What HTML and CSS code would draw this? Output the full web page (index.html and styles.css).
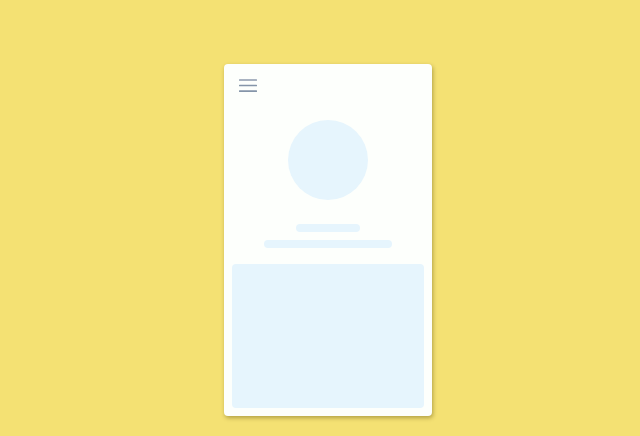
FILE: index.html
```html
<!DOCTYPE html>
<html lang="en">
<head>
  <meta charset="utf-8">
  <meta name="viewport" content="width=device-width, initial-scale=1">
  <title>Profile</title>
  <link rel="stylesheet" href="styles.css">
</head>
<body>
  <main class="stage">
    <article class="card">
      <header class="card-header">
        <button class="menu-button" type="button" aria-label="Menu">
          <svg class="menu-icon" viewBox="0 0 18 14" aria-hidden="true">
            <rect x="0" y="0" width="18" height="2" rx="0.5" fill="#a9b3c1"/>
            <rect x="0" y="5.7" width="18" height="1.6" rx="0.5" fill="#8595a9"/>
            <rect x="0" y="11.2" width="18" height="1.7" rx="0.5" fill="#8595a9"/>
          </svg>
        </button>
      </header>
      <div class="avatar"></div>
      <div class="lines">
        <div class="line line-short"></div>
        <div class="line line-long"></div>
      </div>
      <div class="panel"></div>
    </article>
  </main>
</body>
</html>
```

FILE: styles.css
```css
* {
  box-sizing: border-box;
}

body {
  margin: 0;
  min-height: 100vh;
  background: #f4e173;
  font-family: "Liberation Sans", sans-serif;
}

.stage {
  display: flex;
  justify-content: center;
  padding: 64px 0 20px 16px;
}

.card {
  display: flex;
  flex-direction: column;
  align-items: center;
  padding: 8px;
  border-radius: 4px;
  background: #fdfffc;
  box-shadow: 1px 2px 4px rgba(80, 65, 0, 0.4);
}

.card-header {
  align-self: stretch;
  display: flex;
}

.menu-button {
  display: flex;
  padding: 7px;
  border: 0;
  background: none;
  cursor: pointer;
}

.menu-icon {
  width: 18px;
  height: 14px;
}

.avatar {
  width: 80px;
  height: 80px;
  margin-top: 20px;
  border-radius: 50%;
  background: #e6f5fd;
}

.lines {
  display: flex;
  flex-direction: column;
  align-items: center;
  gap: 8px;
  margin: 24px 0 16px;
}

.line {
  height: 8px;
  border-radius: 4px;
  background: #e6f5fd;
}

.line-short {
  width: 64px;
}

.line-long {
  width: 128px;
}

.panel {
  width: 192px;
  height: 144px;
  border-radius: 4px;
  background: #e6f5fd;
}
```
